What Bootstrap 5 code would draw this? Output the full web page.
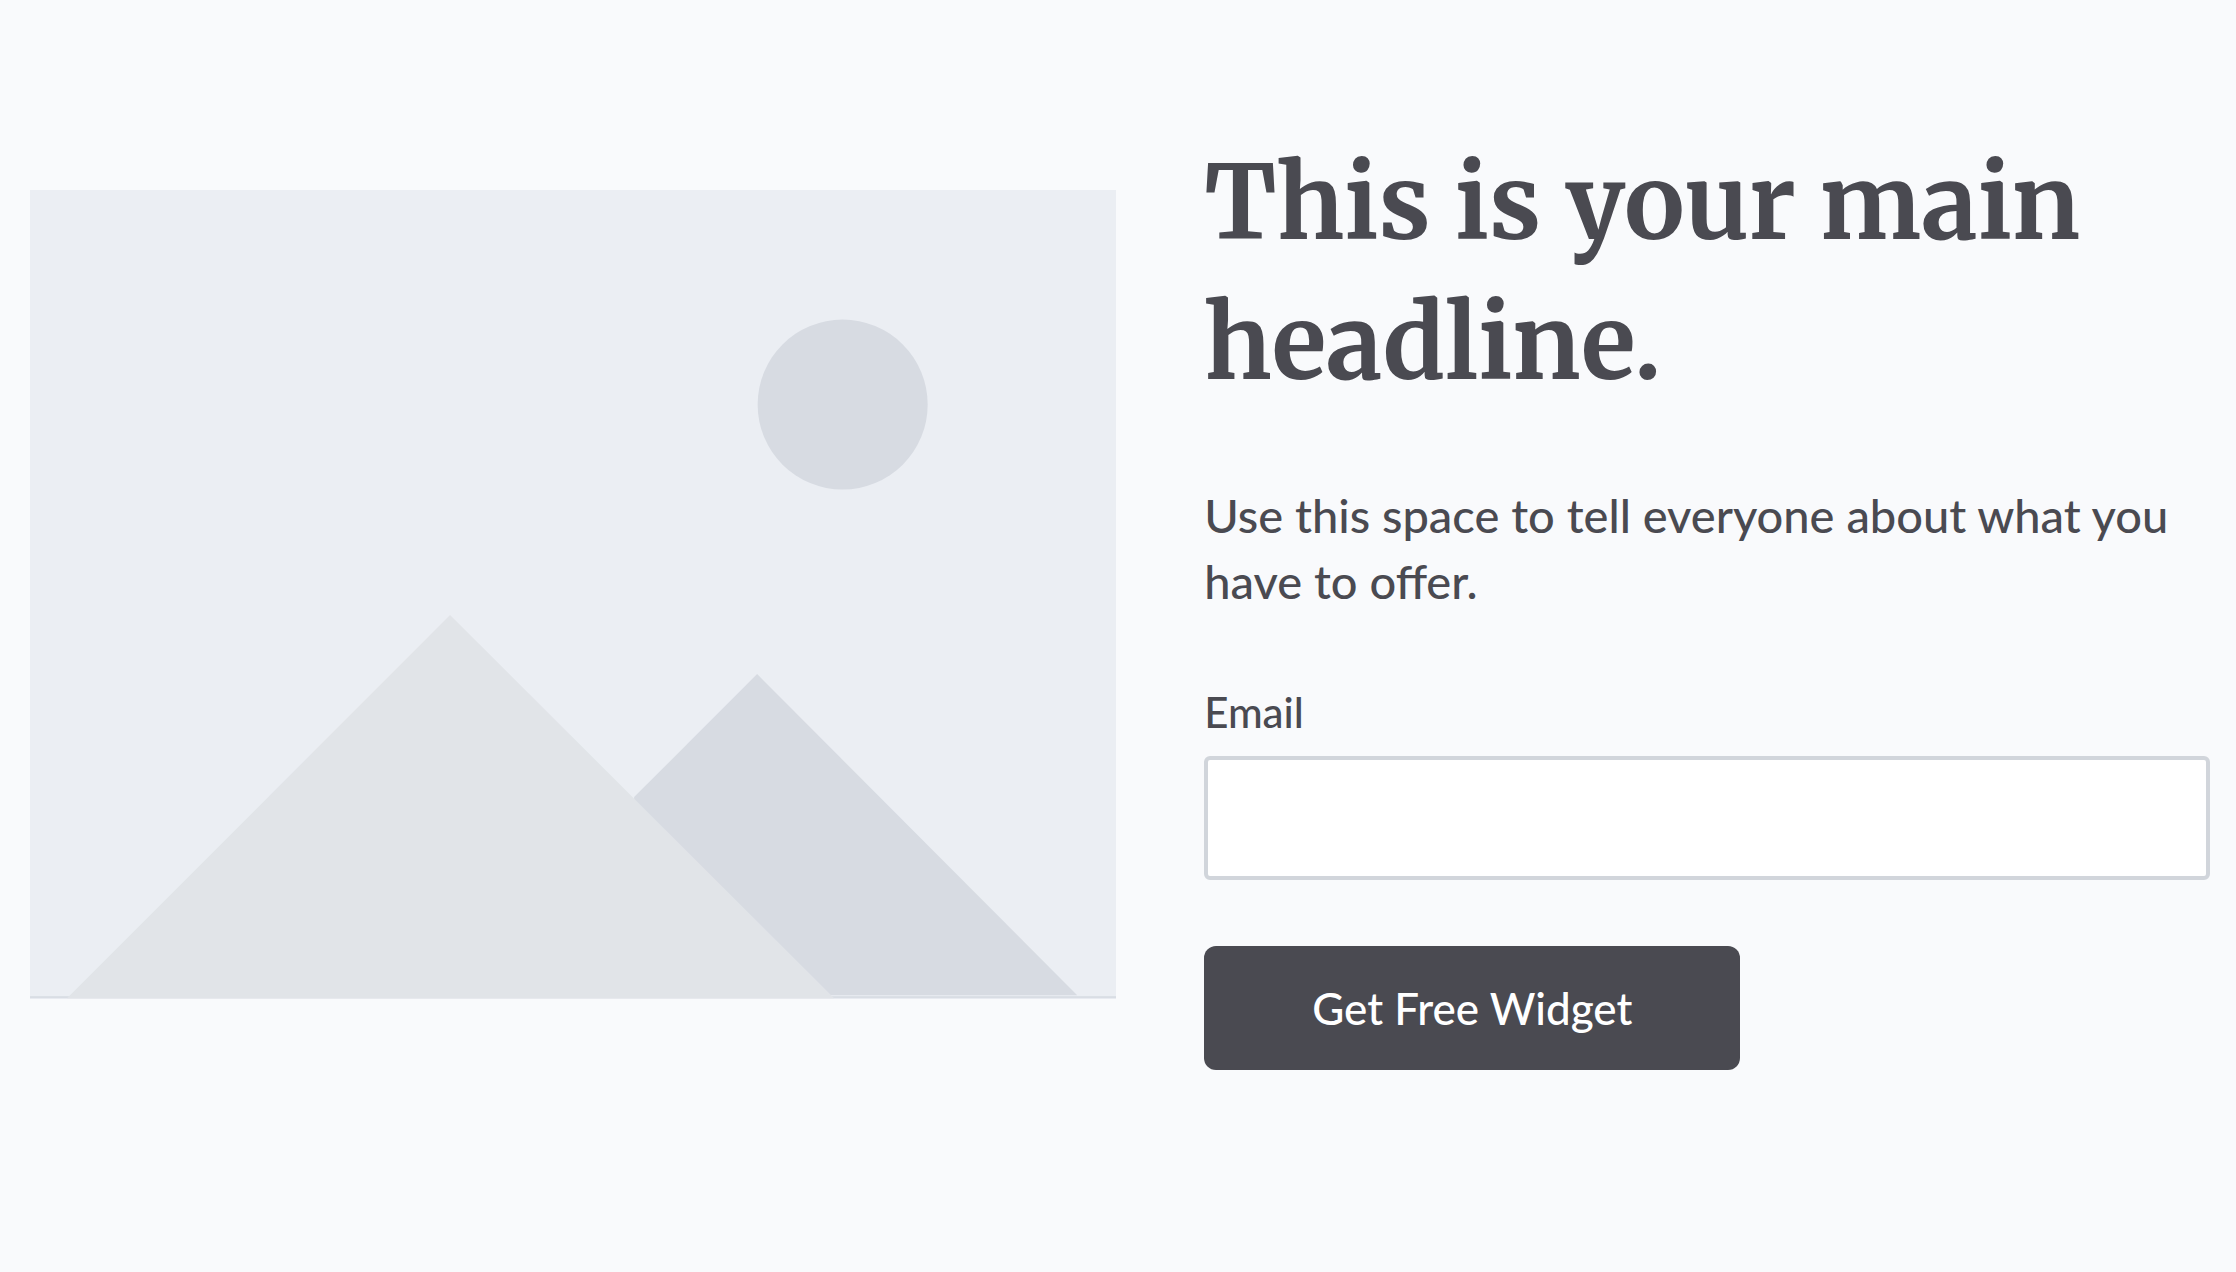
<!DOCTYPE html>
<html lang="en">
<head>
<meta charset="utf-8">
<meta name="viewport" content="width=device-width, initial-scale=1">
<title>Get Free Widget</title>
<link href="https://cdn.jsdelivr.net/npm/bootstrap@5.3.0/dist/css/bootstrap.min.css" rel="stylesheet">
<style>
  body { background: #f9fafc; color: #4a4a51; font-family: Lato, "Open Sans", sans-serif; font-weight: 500; }
  .hero { padding: 134px 26px 120px 30px; column-gap: 88px; row-gap: 48px; }
  .artwork { margin-top: 56px; }
  @media (min-width: 1200px) { .hero { grid-template-columns: 54fr 50fr; } }
  .headline { font: 700 101px/140px Merriweather, "DejaVu Serif Condensed", "DejaVu Serif", serif; margin-bottom: 68px; }
  .pitch { font-size: 47px; line-height: 66px; margin-bottom: 68px; }
  .field-label { font-size: 42px; line-height: 60px; margin-bottom: 14px; }
  .email-box { height: 124px; border: 4px solid #d1d5db; border-radius: 6px; background: #fff; font-size: 42px; padding: 0 24px; margin-bottom: 66px; }
  .cta { --bs-btn-bg: #4a4a51; --bs-btn-color: #fff; --bs-btn-hover-bg: #3a3a41; --bs-btn-hover-color: #fff; --bs-btn-font-weight: 500; border: 0; border-radius: 12px; font-size: 44px; line-height: 60px; padding: 32px 108px; }
</style>
</head>
<body>
<main class="hero d-grid align-items-start">
  <svg class="artwork w-100 h-auto d-block" viewBox="0 0 1086 809" role="img" aria-label="Image placeholder">
    <rect width="1086" height="809" fill="#ebeef3"/>
    <circle cx="812.5" cy="214.5" r="85" fill="#d7dbe2"/>
    <path d="M727 484L1047 805H604V607Z" fill="#d7dbe2"/>
    <rect y="806" width="1086" height="2" fill="#d9dde4"/>
    <path d="M420 425L804 808H37Z" fill="#e1e4e8"/>
  </svg>
  <section>
    <h1 class="headline">This is your main headline.</h1>
    <p class="pitch">Use this space to tell everyone about what you have to offer.</p>
    <form>
      <label class="field-label d-block" for="email">Email</label>
      <input class="email-box form-control" type="email" id="email" name="email">
      <button class="cta btn" type="submit">Get Free Widget</button>
    </form>
  </section>
</main>
<script src="https://cdn.jsdelivr.net/npm/bootstrap@5.3.0/dist/js/bootstrap.bundle.min.js"></script>
</body>
</html>
